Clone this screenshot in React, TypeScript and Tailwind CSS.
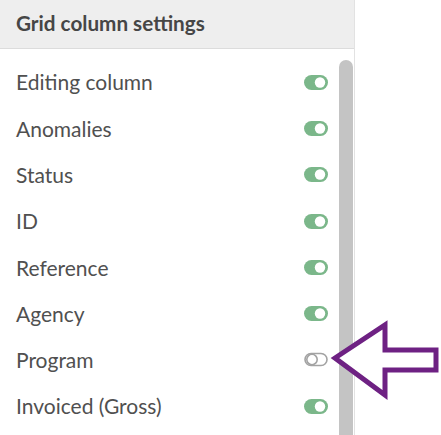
import React from "react";

const columns = [
  { name: "Editing column", on: true },
  { name: "Anomalies", on: true },
  { name: "Status", on: true },
  { name: "ID", on: true },
  { name: "Reference", on: true },
  { name: "Agency", on: true },
  { name: "Program", on: false },
  { name: "Invoiced (Gross)", on: true },
];

const Toggle: React.FC<{ on: boolean }> = ({ on }) =>
  on ? (
    <svg width="24" height="15" viewBox="0 0 24 15">
      <rect x="0" y="0" width="24" height="15" rx="7.5" fill="#7bb78a" />
      <circle cx="16" cy="7.5" r="5.2" fill="#fff" />
    </svg>
  ) : (
    <svg width="24" height="15" viewBox="0 0 24 15">
      <rect x="1" y="1.5" width="22" height="12" rx="6" fill="none" stroke="#a3a3a3" strokeWidth="1.6" />
      <circle cx="8" cy="7.5" r="5.2" fill="none" stroke="#a3a3a3" strokeWidth="1.6" />
    </svg>
  );

export default function App() {
  return (
    <div className="relative h-[435px] w-[441px] overflow-hidden bg-white font-['Lato',sans-serif]">
      <div className="flex h-full w-[355px] flex-col border-r border-[#e2e2e2]">
        <div className="flex h-[49px] items-center border-b border-[#dcdcdc] bg-[#eeeeee] pl-4">
          <span className="text-[20.7px] font-bold text-[#464646]">Grid column settings</span>
        </div>
        <div className="flex flex-1">
          <div className="flex-1 pt-[10px]">
            {columns.map((c) => (
              <div key={c.name} className="flex h-[46.3px] items-center justify-between pl-4 pr-[11px]">
                <span className="text-[21px] text-[#505050]">{c.name}</span>
                <Toggle on={c.on} />
              </div>
            ))}
          </div>
          <div className="w-[15px] pr-px pt-[11px]">
            <div className="h-full rounded-t-full bg-[#c4c4c4]" />
          </div>
        </div>
      </div>

      {/* pointer arrow */}
      <svg className="absolute left-[330px] top-[318px]" width="111" height="84" viewBox="0 0 111 84">
        <path
          d="M5 40 L55 7 L55 32 L106 32 L106 52 L55 52 L55 77 Z"
          fill="#fff"
          stroke="#6e2183"
          strokeWidth="5"
          strokeLinejoin="miter"
        />
      </svg>
    </div>
  );
}
